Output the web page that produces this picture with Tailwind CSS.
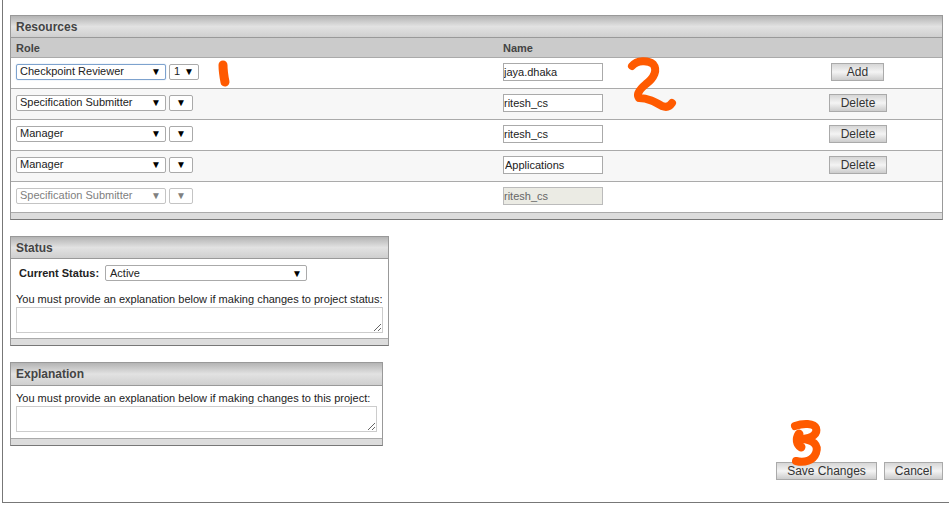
<!DOCTYPE html>
<html lang="en">
  <head>
    <meta charset="UTF-8" />
    <title>Project Resources</title>
    <script src="https://cdn.jsdelivr.net/npm/@tailwindcss/browser@4"></script>
  </head>
  <body class="bg-white w-[949px] h-[508px] overflow-hidden font-['Liberation_Sans',Arial,sans-serif] text-[11px] text-[#222]">
    <!-- Page frame -->
    <div class="relative ml-[2px] w-[947px] h-[503px] border-l border-b border-[#777] pl-[7px] pt-[15px]">
      <!-- Resources -->
      <section class="w-[933px] border border-[#999] border-b-[#777]">
        <h2 class="h-[22px] pl-[5px] leading-[22px] text-xs font-bold text-[#444] bg-gradient-to-b from-[#b4b4b4] via-[#e2e2e2] to-[#cfcfcf] border-b border-[#999]">Resources</h2>
        <div class="flex h-[19px] leading-[21px] pl-[5px] font-bold text-[#444] bg-[#cbcbcb]">
          <span class="w-[487px]">Role</span>
          <span>Name</span>
        </div>

        <div class="flex items-center h-[31px] pl-[5px] pb-[3px] bg-white border-t border-[#aaa]">
          <div class="flex items-center justify-between w-[150px] h-[16px] pl-[3px] pr-[4px] mr-[3px] border border-[#7da2ce] rounded-[2px] shadow-[0_0_1px_#7da2ce]"><span>Checkpoint Reviewer</span><span class="text-[10px] text-black">▼</span></div>
          <div class="flex items-center justify-between w-[30px] h-[16px] px-[4px] mr-[304px] border border-[#aaa] rounded-[2px]"><span>1</span><span class="text-[10px] text-black">▼</span></div>
          <input value="jaya.dhaka" class="w-[100px] h-[18px] px-[0px] border border-[#aaa] text-[11px] bg-white" />
          <button class="w-[53px] h-[18px] ml-[228px] border border-[#aaa] text-xs text-[#333] bg-gradient-to-b from-[#d6d6d6] via-[#f4f4f4] to-[#cccccc]">Add</button>
        </div>

        <div class="flex items-center h-[31px] pl-[5px] pb-[3px] bg-[#f7f7f7] border-t border-[#aaa]">
          <div class="flex items-center justify-between w-[150px] h-[16px] pl-[3px] pr-[4px] mr-[3px] bg-white border border-[#aaa] rounded-[2px]"><span>Specification Submitter</span><span class="text-[10px] text-black">▼</span></div>
          <div class="flex items-center justify-end w-[24px] h-[16px] px-[6px] mr-[310px] bg-white border border-[#aaa] rounded-[2px]"><span class="text-[10px] text-black">▼</span></div>
          <input value="ritesh_cs" class="w-[100px] h-[18px] px-[0px] border border-[#aaa] text-[11px] bg-white" />
          <button class="w-[58px] h-[18px] ml-[226px] border border-[#aaa] text-xs text-[#333] bg-gradient-to-b from-[#d6d6d6] via-[#f4f4f4] to-[#cccccc]">Delete</button>
        </div>

        <div class="flex items-center h-[31px] pl-[5px] pb-[3px] bg-white border-t border-[#aaa]">
          <div class="flex items-center justify-between w-[150px] h-[16px] pl-[3px] pr-[4px] mr-[3px] bg-white border border-[#aaa] rounded-[2px]"><span>Manager</span><span class="text-[10px] text-black">▼</span></div>
          <div class="flex items-center justify-end w-[24px] h-[16px] px-[6px] mr-[310px] bg-white border border-[#aaa] rounded-[2px]"><span class="text-[10px] text-black">▼</span></div>
          <input value="ritesh_cs" class="w-[100px] h-[18px] px-[0px] border border-[#aaa] text-[11px] bg-white" />
          <button class="w-[58px] h-[18px] ml-[226px] border border-[#aaa] text-xs text-[#333] bg-gradient-to-b from-[#d6d6d6] via-[#f4f4f4] to-[#cccccc]">Delete</button>
        </div>

        <div class="flex items-center h-[31px] pl-[5px] pb-[3px] bg-[#f7f7f7] border-t border-[#aaa]">
          <div class="flex items-center justify-between w-[150px] h-[16px] pl-[3px] pr-[4px] mr-[3px] bg-white border border-[#aaa] rounded-[2px]"><span>Manager</span><span class="text-[10px] text-black">▼</span></div>
          <div class="flex items-center justify-end w-[24px] h-[16px] px-[6px] mr-[310px] bg-white border border-[#aaa] rounded-[2px]"><span class="text-[10px] text-black">▼</span></div>
          <input value="Applications" class="w-[100px] h-[18px] px-[1px] border border-[#aaa] text-[11px] bg-white" />
          <button class="w-[58px] h-[18px] ml-[226px] border border-[#aaa] text-xs text-[#333] bg-gradient-to-b from-[#d6d6d6] via-[#f4f4f4] to-[#cccccc]">Delete</button>
        </div>

        <div class="flex items-center h-[31px] pl-[5px] pb-[3px] bg-white border-t border-[#aaa] text-[#808080]">
          <div class="flex items-center justify-between w-[150px] h-[16px] pl-[3px] pr-[4px] mr-[3px] bg-white border border-[#c4c4c4] rounded-[2px]"><span>Specification Submitter</span><span class="text-[10px]">▼</span></div>
          <div class="flex items-center justify-end w-[24px] h-[16px] px-[6px] mr-[310px] bg-white border border-[#c4c4c4] rounded-[2px]"><span class="text-[10px]">▼</span></div>
          <input disabled value="ritesh_cs" class="w-[100px] h-[18px] px-[0px] border border-[#bbb] text-[11px] text-[#666] bg-[#ebebe4]" />
        </div>

        <div class="h-[7px] bg-[#dcdcdc] border-t border-[#aaa]"></div>
      </section>

      <!-- Status -->
      <section class="w-[379px] mt-[16px] border border-[#999] border-b-[#777]">
        <h2 class="h-[22px] pl-[5px] leading-[22px] text-xs font-bold text-[#444] bg-gradient-to-b from-[#b4b4b4] via-[#e2e2e2] to-[#cfcfcf] border-b border-[#999]">Status</h2>
        <div class="h-[79px] px-[5px] pt-[6px]">
          <div class="flex items-center h-[16px] pl-[3px]">
            <span class="w-[86px] font-bold">Current Status:</span>
            <div class="flex items-center justify-between w-[202px] h-[16px] px-[4px] border border-[#aaa] rounded-[2px]"><span>Active</span><span class="text-[10px] text-black">▼</span></div>
          </div>
          <p class="mt-[12px] leading-[13px] whitespace-nowrap">You must provide an explanation below if making changes to project status:</p>
          <textarea class="block w-[367px] h-[26px] mt-[1px] border border-[#ccc] bg-white"></textarea>
        </div>
        <div class="h-[7px] bg-[#dcdcdc] border-t border-[#aaa]"></div>
      </section>

      <!-- Explanation -->
      <section class="w-[373px] mt-[16px] border border-[#999] border-b-[#777]">
        <h2 class="h-[23px] pl-[5px] leading-[23px] text-xs font-bold text-[#444] bg-gradient-to-b from-[#b4b4b4] via-[#e2e2e2] to-[#cfcfcf] border-b border-[#999]">Explanation</h2>
        <div class="h-[52px] px-[5px] pt-[6px]">
          <p class="leading-[13px] whitespace-nowrap">You must provide an explanation below if making changes to this project:</p>
          <textarea class="block w-[361px] h-[26px] mt-[1px] border border-[#ccc] bg-white"></textarea>
        </div>
        <div class="h-[7px] bg-[#dcdcdc] border-t border-[#aaa]"></div>
      </section>

      <!-- Actions -->
      <div class="flex justify-end gap-[7px] w-[933px] mt-[16px]">
        <button class="w-[101px] h-[18px] border border-[#aaa] text-xs text-[#333] bg-gradient-to-b from-[#d6d6d6] via-[#f4f4f4] to-[#cccccc]">Save Changes</button>
        <button class="w-[59px] h-[18px] border border-[#aaa] text-xs text-[#333] bg-gradient-to-b from-[#d6d6d6] via-[#f4f4f4] to-[#cccccc]">Cancel</button>
      </div>
    </div>

    <!-- Hand-drawn annotations -->
    <svg class="absolute top-0 left-0 pointer-events-none" width="949" height="508" fill="none" stroke="#ff5a00" stroke-linecap="round" stroke-linejoin="round">
      <path d="M223 65 C223 70 224 77 225 82" stroke-width="9" />
      <path d="M632 66 C637 60 648 60 653 64 C658 70 654 78 646 84 C640 89 636 94 639 98 C648 98 655 102 662 106 C667 108 670 106 672 103" stroke-width="8" />
      <path d="M795 426 C803 423 814 423 816 428 C818 434 812 438 803 439 C813 440 819 445 816 453 C813 461 804 463 796 461" stroke-width="8" />
      <path d="M799 434 C796 439 797 444 801 447" stroke-width="9" />
    </svg>
  </body>
</html>
